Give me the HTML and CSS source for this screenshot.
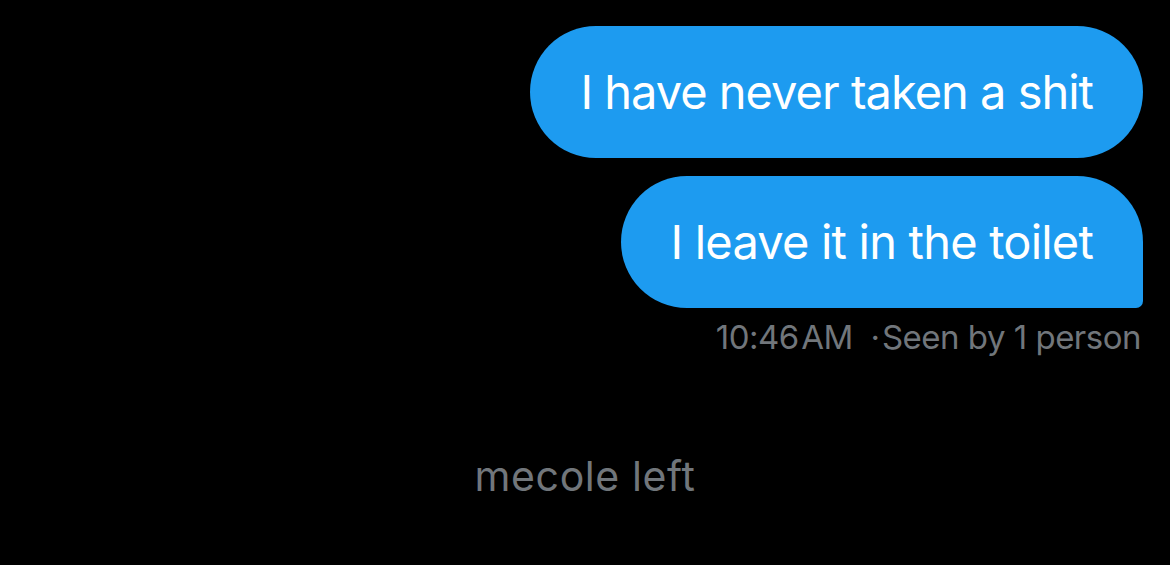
FILE: index.html
```html
<!DOCTYPE html>
<html lang="en">
<head>
<meta charset="UTF-8">
<title>Messages</title>
<link rel="stylesheet" href="styles.css">
</head>
<body>

<div class="thread">
    <div class="messages">
        <div class="bubble">I have never taken a shit</div>
        <div class="bubble last">I leave it in the toilet</div>
        <div class="meta">10:46&#8202;AM &nbsp;&middot;&#8202;Seen by 1 person</div>
    </div>

    <div class="notice">mecole left</div>
</div>

</body>
</html>
```

FILE: styles.css
```css
body {
    margin: 0;
    background-color: #000;
    font-family: Inter, "Noto Sans", sans-serif;
    color: #fff;
}

.thread {
    width: 1170px;
    height: 565px;
    padding: 26px 27px 0 0;
    box-sizing: border-box;
    display: flex;
    flex-direction: column;
}

.messages {
    display: flex;
    flex-direction: column;
    align-items: flex-end;
    gap: 18px;
}

.bubble {
    background-color: #1d9bf0;
    color: #fff;
    font-size: 47px;
    line-height: 132px;
    height: 132px;
    padding: 0 50px;
    border-radius: 66px;
    letter-spacing: -1px;
    white-space: nowrap;
}

.bubble.last {
    border-bottom-right-radius: 7px;
    letter-spacing: -0.8px;
}

.meta {
    margin-top: -9px;
    font-size: 33px;
    color: #71767b;
    letter-spacing: -0.5px;
    margin-right: 2px;
}

.notice {
    margin-top: 94px;
    text-align: center;
    font-size: 41px;
    color: #71767b;
    padding-left: 27px;
    letter-spacing: 0.6px;
}
```
